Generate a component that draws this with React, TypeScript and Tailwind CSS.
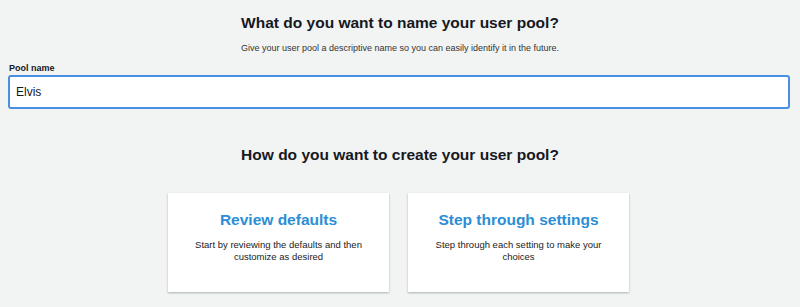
export default function App() {
  return (
    <div
      className="h-[307px] w-[800px] overflow-hidden bg-[#f2f3f3] text-[#16191f]"
      style={{ fontFamily: '"Liberation Sans", Arial, sans-serif' }}
    >
      <div className="flex flex-col items-center pt-[13px]">
        <h1 className="text-[15.5px] font-bold leading-[20px]">What do you want to name your user pool?</h1>
        <p className="mt-[9px] text-[9px] leading-[12px] text-[#333]">
          Give your user pool a descriptive name so you can easily identify it in the future.
        </p>
      </div>

      <div className="mt-[8px] px-[8px]">
        <label className="block pl-[1px] text-[9px] font-bold leading-[12px]">Pool name</label>
        <input
          defaultValue="Elvis"
          className="mt-[1px] h-[34px] w-[782px] rounded-[3px] border-2 border-[#4a90e2] bg-white px-[6px] text-[12px] text-[#16191f] outline-none"
        />
      </div>

      <h2 className="mt-[36px] text-center text-[15.5px] font-bold leading-[20px]">
        How do you want to create your user pool?
      </h2>

      <div className="mt-[28px] flex justify-center gap-[19px] pr-[3px]">
        <div className="flex h-[99px] w-[221px] flex-col items-center bg-white pt-[17px] shadow-[0_1px_2px_rgba(0,28,36,0.3)]">
          <div className="text-[15.5px] font-bold leading-[20px] text-[#2b8ed6]">Review defaults</div>
          <p className="mt-[9px] w-[174px] text-center text-[9.5px] leading-[12px] text-[#222]">
            Start by reviewing the defaults and then customize as desired
          </p>
        </div>
        <div className="flex h-[99px] w-[221px] flex-col items-center bg-white pt-[17px] shadow-[0_1px_2px_rgba(0,28,36,0.3)]">
          <div className="text-[15.5px] font-bold leading-[20px] text-[#2b8ed6]">Step through settings</div>
          <p className="mt-[9px] w-[174px] text-center text-[9.5px] leading-[12px] text-[#222]">
            Step through each setting to make your choices
          </p>
        </div>
      </div>
    </div>
  );
}
